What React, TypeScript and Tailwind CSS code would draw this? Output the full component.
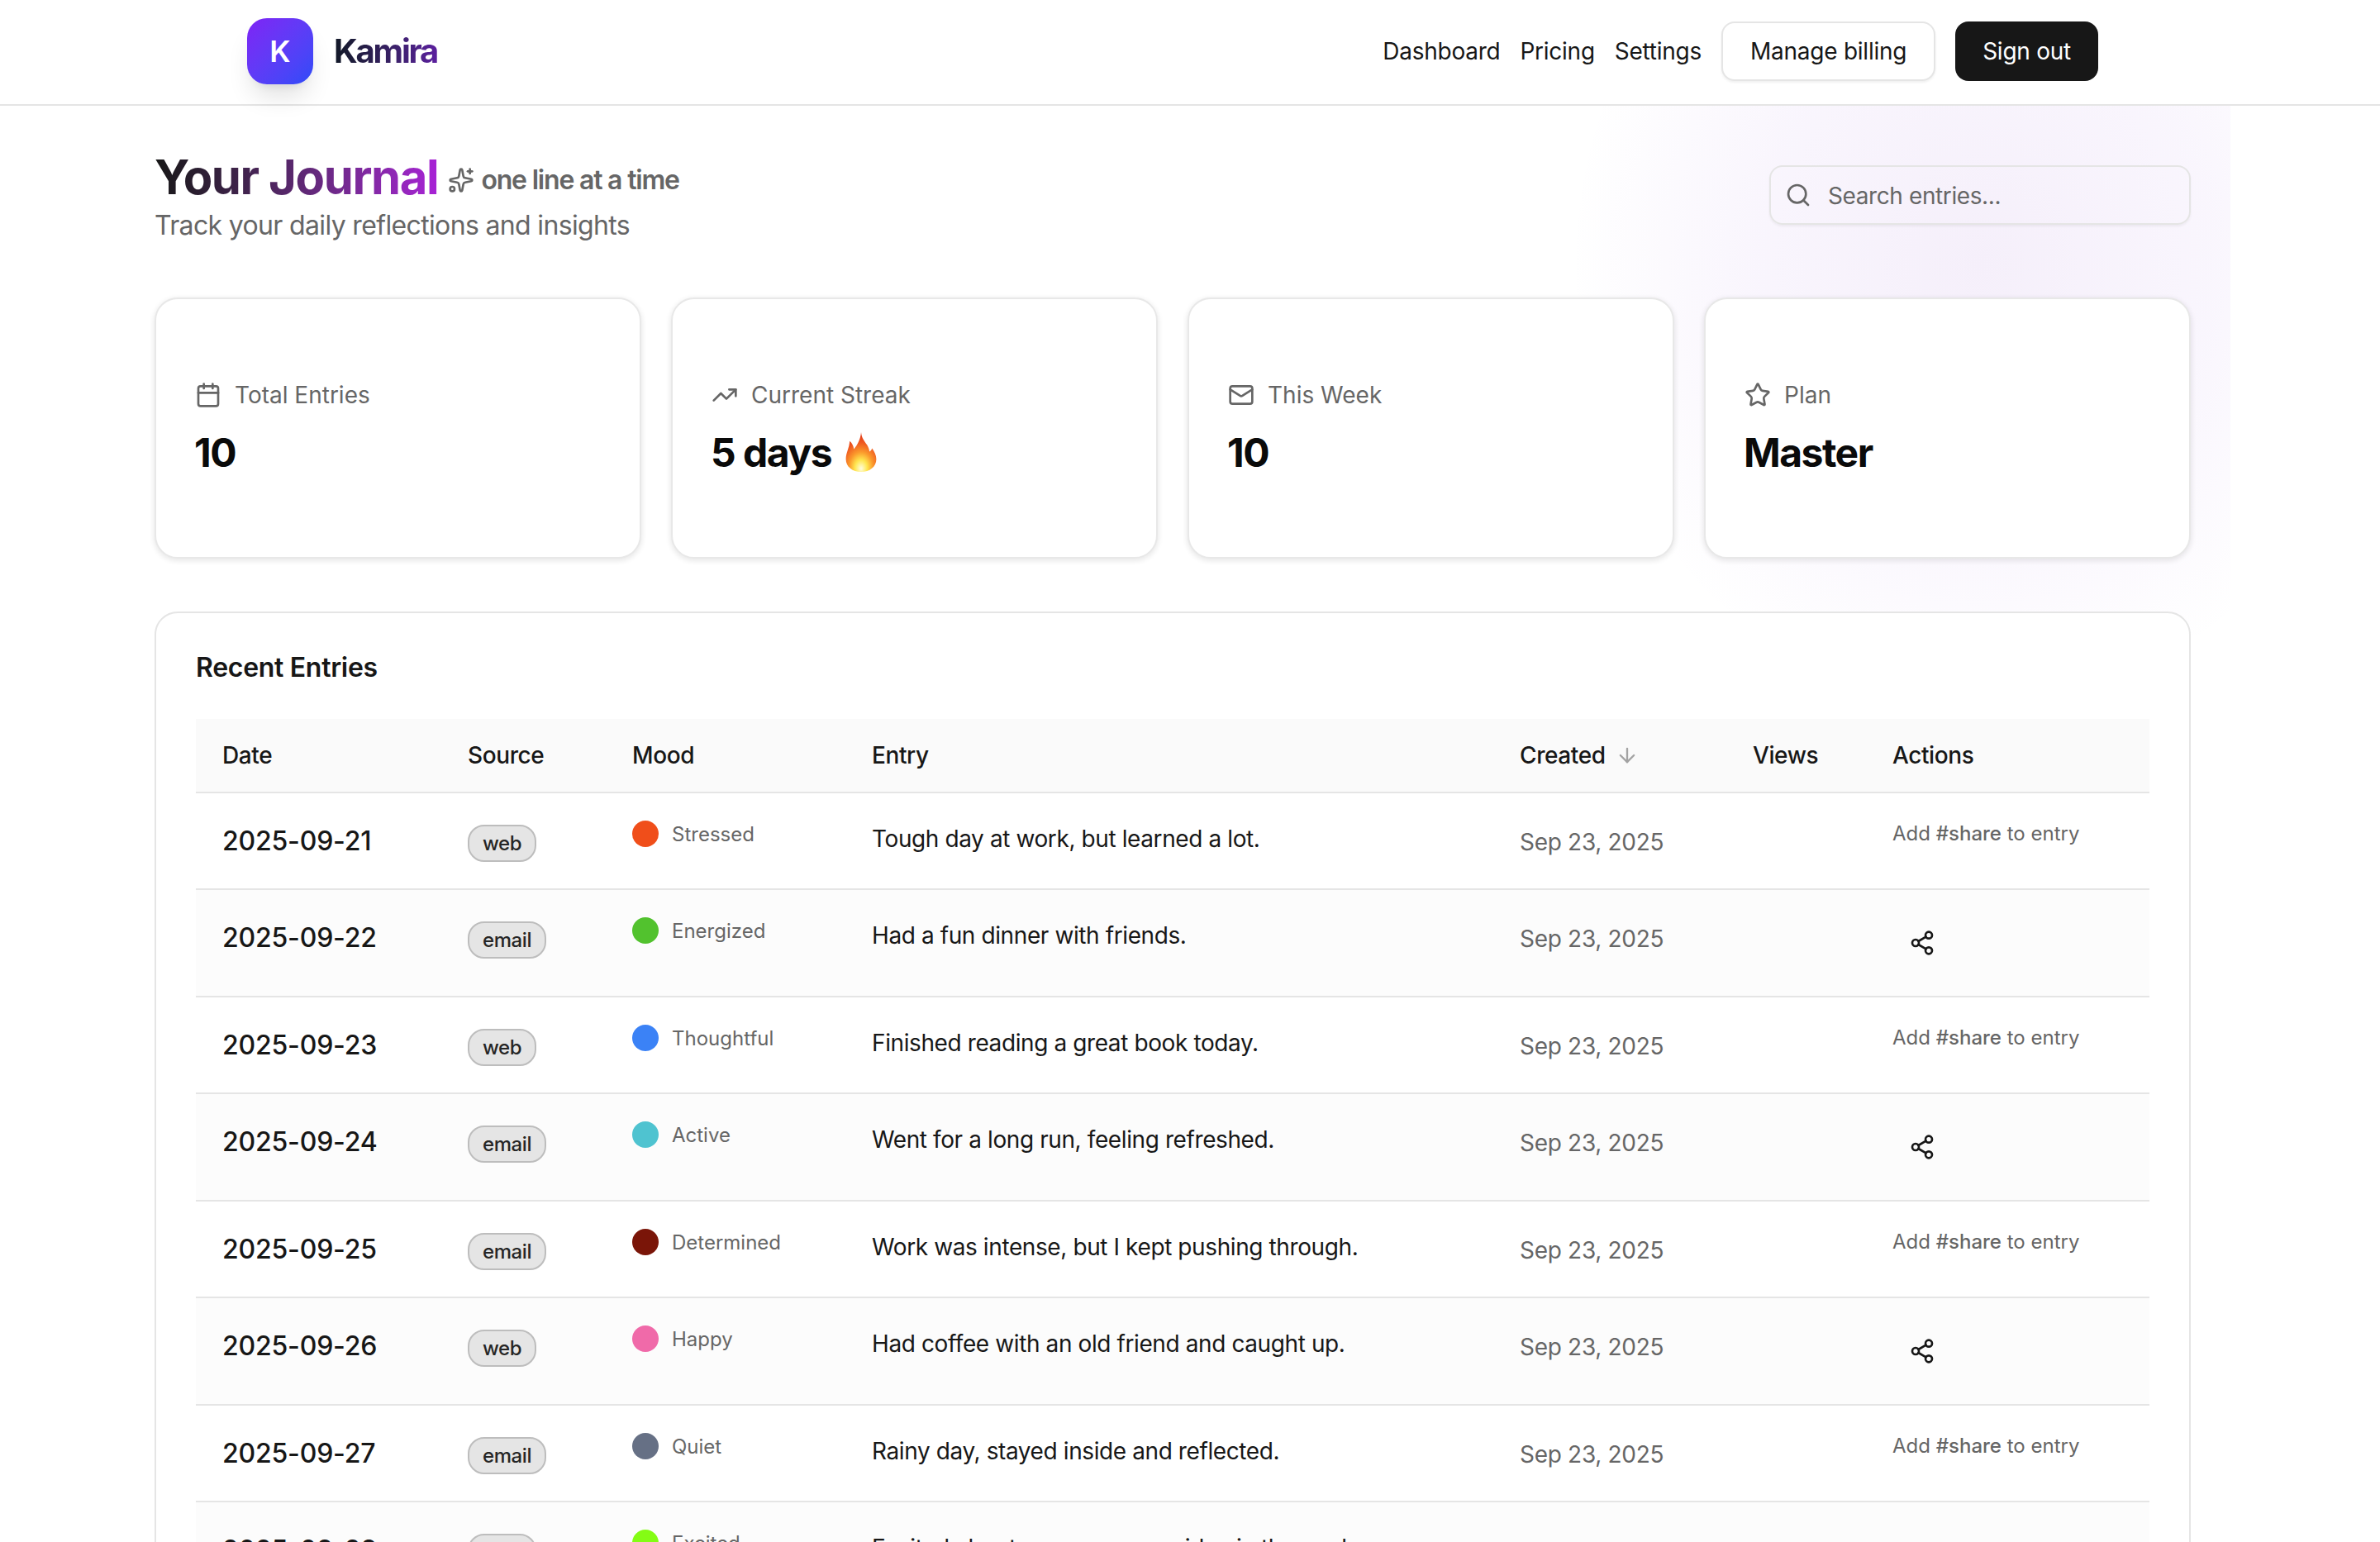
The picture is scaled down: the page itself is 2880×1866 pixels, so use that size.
import { ArrowDown, Calendar, Mail, Search, Share2, Sparkles, Star, TrendingUp, type LucideIcon } from 'lucide-react';

type Entry = {
  date: string;
  source: 'web' | 'email';
  mood: string;
  dot: string;
  text: string;
};

const ENTRIES: Entry[] = [
  { date: '2025-09-21', source: 'web', mood: 'Stressed', dot: 'bg-[#f04e1a]', text: 'Tough day at work, but learned a lot.' },
  { date: '2025-09-22', source: 'email', mood: 'Energized', dot: 'bg-[#52c22e]', text: 'Had a fun dinner with friends.' },
  { date: '2025-09-23', source: 'web', mood: 'Thoughtful', dot: 'bg-[#3b82f6]', text: 'Finished reading a great book today.' },
  { date: '2025-09-24', source: 'email', mood: 'Active', dot: 'bg-[#4fc3d0]', text: 'Went for a long run, feeling refreshed.' },
  { date: '2025-09-25', source: 'email', mood: 'Determined', dot: 'bg-[#7a1508]', text: 'Work was intense, but I kept pushing through.' },
  { date: '2025-09-26', source: 'web', mood: 'Happy', dot: 'bg-[#f06aa9]', text: 'Had coffee with an old friend and caught up.' },
  { date: '2025-09-27', source: 'email', mood: 'Quiet', dot: 'bg-[#667085]', text: 'Rainy day, stayed inside and reflected.' },
  { date: '2025-09-28', source: 'web', mood: 'Excited', dot: 'bg-[#84fc14]', text: 'Excited about a new summer idea in the works.' },
];

const HEADERS = ['Date', 'Source', 'Mood', 'Entry', 'Created', 'Views', 'Actions'];

function Flame() {
  return (
    <svg width="38" height="48" viewBox="0 0 36 47" aria-hidden="true" className="ml-[17px] -mt-[3px]">
      <defs>
        <radialGradient id="flame" cx="50%" cy="86%" r="78%" fx="50%" fy="92%">
          <stop offset="0%" stopColor="#fffde0" />
          <stop offset="26%" stopColor="#ffe64f" />
          <stop offset="50%" stopColor="#fb9a2c" />
          <stop offset="78%" stopColor="#ef5a22" />
          <stop offset="100%" stopColor="#e23d17" />
        </radialGradient>
      </defs>
      <path
        d="M18 0C18.500 7 22 10.500 25 15C26.500 17.500 27.500 20 28 23C29.500 22 30.500 20.500 31 19C34 23 36 27.500 36 32C36 41 28 47 18 47C8 47 0 41 0 32C0 24 4 19 4.500 10.500C7.500 13 9 16.500 9.500 20C13.500 15.500 17.500 8 18 0Z"
        fill="url(#flame)"
      />
    </svg>
  );
}

function StatCard({ icon: Icon, label, children }: { icon: LucideIcon; label: string; children: React.ReactNode }) {
  return (
    <div className="flex h-[316px] flex-col justify-center rounded-[28px] border-2 border-[#e8e8e8] bg-white px-[46px] pb-[2px] shadow-[0_2px_6px_1px_rgba(0,0,0,0.09)]">
      <div className="flex items-center gap-4 pl-[1px] text-[28px] leading-[40px] text-[#666666]">
        <Icon size={32} strokeWidth={2} />
        <span>{label}</span>
      </div>
      <div className="mt-[22px] flex h-[56px] items-center text-[48px] font-bold leading-[56px] tracking-[-1.5px] text-[#0a0a0a]">
        {children}
      </div>
    </div>
  );
}

function Row({ entry, index }: { entry: Entry; index: number }) {
  const even = index % 2 === 1;
  return (
    <tr className={even ? 'h-[130px] border-b-2 border-[#e5e5e5] bg-[#fcfcfc]' : 'h-[117px] border-b-2 border-[#e5e5e5]'}>
      <td className="px-8 pt-[38px] align-top text-[32px] font-medium leading-[40px] tracking-[-0.2px] text-[#171717]">{entry.date}</td>
      <td className="px-8 pt-[38px] align-top">
        <span className="inline-flex h-[45px] items-center rounded-[20px] border-2 border-[#bdbdbd] bg-[#e5e5e5] px-[16px] text-[24px] font-medium tracking-[-0.4px] text-[#262626]">
          {entry.source}
        </span>
      </td>
      <td className="px-8 pt-[32px] align-top">
        <div className="flex items-center gap-4">
          <span className={`h-8 w-8 rounded-full ${entry.dot}`} />
          <span className="mt-[2px] text-[24px] leading-[32px] text-[#666666]">{entry.mood}</span>
        </div>
      </td>
      <td className="px-8 pt-[35px] align-top text-[28px] leading-[40px] tracking-[-0.4px] text-[#171717]">{entry.text}</td>
      <td className="px-8 pt-[39px] align-top text-[28px] leading-[40px] tracking-[-0.3px] text-[#666666]">Sep 23, 2025</td>
      <td className="px-8" />
      <td className="px-8 pt-[32px] align-top">
        {even ? (
          <button className="flex h-[64px] w-[72px] items-center justify-center text-[#171717]">
            <Share2 size={32} />
          </button>
        ) : (
          <span className="relative top-[1px] text-[24px] leading-[32px] text-[#666666]">
            Add <span className="font-medium">#share</span> to entry
          </span>
        )}
      </td>
    </tr>
  );
}

export default function App() {
  return (
    <div className="h-[1866px] w-[2880px] overflow-hidden bg-white font-['Inter',sans-serif] text-[#171717]">
      <header className="h-[128px] border-b-2 border-[#e5e5e5] pr-[42px]">
        <div className="mx-auto flex h-full w-[2240px] items-center justify-between pb-[2px]">
          <div className="flex items-center gap-[25px]">
            <div className="relative z-10 flex h-20 w-20 items-center justify-center rounded-[24px] bg-gradient-to-br from-[#7e22f5] to-[#2b4bf8] text-[36px] font-semibold text-white shadow-[0_20px_30px_-6px_rgba(0,0,0,0.12),0_8px_12px_-8px_rgba(0,0,0,0.1)]">
              K
            </div>
            <span className="bg-gradient-to-r from-[#111827] to-[#5b1f9e] bg-clip-text text-[40px] font-bold tracking-[-2.2px] text-transparent">
              Kamira
            </span>
          </div>
          <nav className="flex items-center gap-6 text-[28px] tracking-[-0.25px]">
            <a>Dashboard</a>
            <a>Pricing</a>
            <a>Settings</a>
            <button className="h-[72px] rounded-[16px] border-2 border-[#e5e5e5] bg-white px-[33px] shadow-[0_2px_3px_rgba(0,0,0,0.06)]">
              Manage billing
            </button>
            <button className="h-[72px] rounded-[16px] bg-[#171717] px-[33px] text-white">Sign out</button>
          </nav>
        </div>
      </header>

      <main className="relative ml-[139px] w-[2560px] px-12 pt-[54px]">
        <div className="pointer-events-none absolute right-0 top-0 h-[640px] w-[800px] bg-[radial-gradient(ellipse_62%_85%_at_62%_30%,rgba(140,70,200,0.085),rgba(140,70,220,0.05)_55%,transparent_100%)]" />

        <div className="relative flex items-center justify-between">
          <div>
            <div className="flex h-[60px] items-center">
              <h1 className="mt-[4px] bg-gradient-to-r from-[#171717] to-[#a822d6] bg-clip-text text-[58px] font-bold leading-[60px] tracking-[-1.4px] text-transparent">
                Your Journal
              </h1>
              <Sparkles size={32} className="ml-[12px] mt-[12px] text-[#666666]" />
              <span className="ml-[8px] mt-[12px] text-[32px] font-semibold tracking-[-1.2px] text-[#666666]">one line at a time</span>
            </div>
            <p className="mt-[11px] text-[32px] leading-[40px] tracking-[-0.65px] text-[#666666]">Track your daily reflections and insights</p>
          </div>
          <div className="mb-[4px] flex h-[72px] w-[510px] items-center gap-[20px] rounded-[16px] border-2 border-[#e5e5e5] pl-[17px] shadow-[0_2px_3px_rgba(0,0,0,0.05)]">
            <Search size={32} className="text-[#666666]" />
            <span className="pt-[2px] text-[28px] tracking-[-0.4px] text-[#666666]">Search entries...</span>
          </div>
        </div>

        <div className="relative mt-[67px] grid grid-cols-4 gap-9">
          <StatCard icon={Calendar} label="Total Entries">10</StatCard>
          <StatCard icon={TrendingUp} label="Current Streak">
            5 days
            <Flame />
          </StatCard>
          <StatCard icon={Mail} label="This Week">10</StatCard>
          <StatCard icon={Star} label="Plan">Master</StatCard>
        </div>

        <section className="relative mt-16 rounded-[28px] border-2 border-[#e5e5e5] bg-white px-12 pt-[46px]">
          <h2 className="text-[32px] font-semibold leading-[40px] tracking-[-0.3px] text-[#171717]">Recent Entries</h2>
          <table className="mt-[42px] w-full table-fixed">
            <colgroup>
              <col className="w-[297px]" />
              <col className="w-[199px]" />
              <col className="w-[290px]" />
              <col className="w-[784px]" />
              <col className="w-[282px]" />
              <col className="w-[169px]" />
              <col className="w-[343px]" />
            </colgroup>
            <thead>
              <tr className="h-[89px] border-b-2 border-[#e5e5e5] bg-[#fafafa]">
                {HEADERS.map((h) => (
                  <th key={h} className="px-8 text-left text-[28px] font-medium tracking-[-0.4px] text-[#171717]">
                    {h === 'Created' ? (
                      <span className="flex items-center gap-[12px]">
                        {h}
                        <ArrowDown size={28} className="text-[#a3a3a3]" />
                      </span>
                    ) : (
                      h
                    )}
                  </th>
                ))}
              </tr>
            </thead>
            <tbody>
              {ENTRIES.map((entry, i) => (
                <Row key={entry.date} entry={entry} index={i} />
              ))}
            </tbody>
          </table>
        </section>
      </main>
    </div>
  );
}
